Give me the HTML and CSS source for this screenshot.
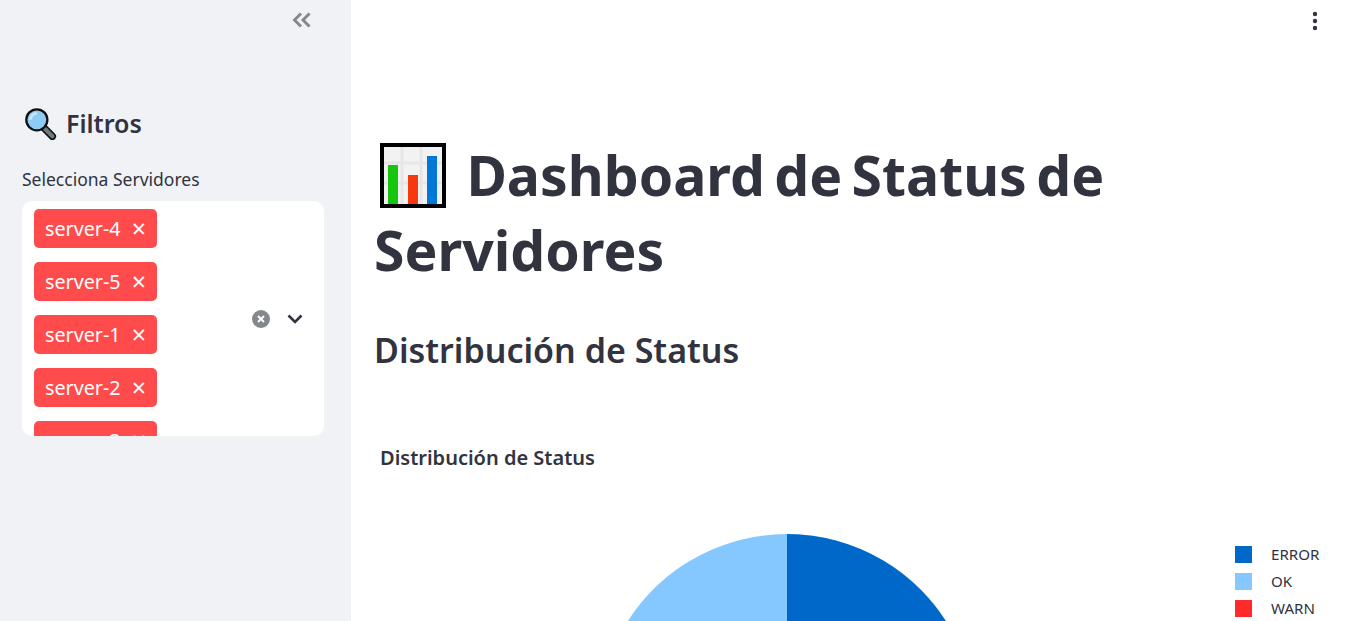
FILE: index.html
```html
<!DOCTYPE html>
<html lang="en">
<head>
    <meta charset="UTF-8">
    <meta name="viewport" content="width=device-width, initial-scale=1.0">
    <title>Dashboard de Status de Servidores</title>
    <link rel="stylesheet" href="styles.css">
</head>
<body>
    <aside class="sidebar">
        <div class="sidebar-top">
            <svg class="collapse-icon" viewBox="0 0 20 16" width="20" height="16" aria-hidden="true">
                <path d="M9 1.500 2.500 8 9 14.500M17.500 1.500 11 8l6.500 6.500" fill="none" stroke="#85878f" stroke-width="2.900"/>
            </svg>
        </div>
        <h2 class="sidebar-title">
            <svg class="lens-icon" viewBox="0 0 36 36" width="33" height="33" aria-hidden="true">
                <path d="M21 22 31 32" stroke="#111" stroke-width="8" stroke-linecap="round"/>
                <path d="M23 24 31 32" stroke="#6d7b80" stroke-width="4.500" stroke-linecap="round"/>
                <circle cx="14" cy="14" r="11.500" fill="#8ecbf5" stroke="#111" stroke-width="2.500"/>
                <path d="M7 14a7 7 0 0 1 7-7" stroke="#c8e6fa" stroke-width="3" fill="none"/>
            </svg>
            <span>Filtros</span>
        </h2>
        <label class="field-label">Selecciona Servidores</label>
        <div class="multiselect">
            <div class="tags">
                <span class="tag">server-4 <i class="tag-x">&times;</i></span>
                <span class="tag">server-5 <i class="tag-x">&times;</i></span>
                <span class="tag">server-1 <i class="tag-x">&times;</i></span>
                <span class="tag">server-2 <i class="tag-x">&times;</i></span>
                <span class="tag">server-3 <i class="tag-x">&times;</i></span>
            </div>
            <div class="select-controls">
                <svg viewBox="0 0 18 18" width="18" height="18" aria-hidden="true">
                    <circle cx="9" cy="9" r="9" fill="#85878f"/>
                    <path d="M6 6l6 6M12 6l-6 6" stroke="#fff" stroke-width="2"/>
                </svg>
                <svg viewBox="0 0 16 10" width="16" height="10" aria-hidden="true">
                    <path d="M1.500 1.500 8 8l6.500-6.500" fill="none" stroke="#31333f" stroke-width="2.600"/>
                </svg>
            </div>
        </div>
    </aside>

    <main class="main">
        <svg class="menu-icon" viewBox="0 0 6 20" width="6" height="20" aria-hidden="true">
            <circle cx="3" cy="3" r="2.200" fill="#31333f"/>
            <circle cx="3" cy="10" r="2.200" fill="#31333f"/>
            <circle cx="3" cy="17" r="2.200" fill="#31333f"/>
        </svg>
        <h1 class="page-title">
            <svg class="chart-emoji" viewBox="0 0 66 66" width="66" height="66" aria-hidden="true">
                <rect x="2" y="2" width="62" height="61" fill="#f2f2f2" stroke="#000" stroke-width="4"/>
                <path d="M4 20H62M4 40H62M22 4V61M41 4V61" stroke="#e6e6e6" stroke-width="3"/>
                <rect x="8" y="22" width="10" height="39" fill="#16c60c"/>
                <rect x="28" y="32" width="10" height="29" fill="#f7390f"/>
                <rect x="47" y="13" width="10" height="48" fill="#0078d7"/>
            </svg>
            Dashboard de Status de Servidores
        </h1>
        <h2 class="section-title">Distribución de Status</h2>
        <section class="chart">
            <h3 class="chart-title">Distribución de Status</h3>
            <div class="chart-body">
                <div class="pie-area">
                    <svg viewBox="0 0 380 380" width="380" height="380" aria-hidden="true">
                        <circle cx="190" cy="190" r="189" fill="#85c7ff"/>
                        <path d="M190 190V1A189 189 0 0 1 350 290Z" fill="#0068c9"/>
                    </svg>
                </div>
                <ul class="legend">
                    <li><span class="swatch swatch-error"></span>ERROR</li>
                    <li><span class="swatch swatch-ok"></span>OK</li>
                    <li><span class="swatch swatch-warn"></span>WARN</li>
                </ul>
            </div>
        </section>
    </main>
</body>
</html>
```

FILE: styles.css
```css
/* General Styles */
* {
    box-sizing: border-box;
}

html, body {
    height: 100%;
}

body {
    display: flex;
    margin: 0;
    overflow: hidden;
    font-family: 'Noto Sans', sans-serif;
    background-color: #fff;
    color: #31333f;
}

/* Sidebar */
.sidebar {
    flex: 0 0 351px;
    padding: 0 27px 0 22px;
    background-color: #f0f2f6;
}

.sidebar-top {
    display: flex;
    justify-content: flex-end;
    height: 103px;
    padding: 12px 12px 0 0;
}

.sidebar-title {
    display: flex;
    align-items: center;
    gap: 9px;
    height: 40px;
    margin: 0 0 25px;
    font-size: 25px;
    font-weight: 600;
}

.lens-icon {
    margin-left: 2px;
}

.field-label {
    display: block;
    height: 22px;
    margin-bottom: 11px;
    font-size: 17.500px;
    line-height: 22px;
}

.multiselect {
    display: flex;
    justify-content: space-between;
    align-items: center;
    height: 235px;
    padding: 8px 21px 0 12px;
    overflow: hidden;
    background-color: #fff;
    border-radius: 10px;
}

.tags {
    display: flex;
    flex-direction: column;
    align-items: flex-start;
    align-self: flex-start;
    gap: 14px;
}

.tag {
    display: flex;
    align-items: center;
    justify-content: space-between;
    width: 123px;
    height: 39px;
    padding: 0 11px;
    background-color: #ff4b4b;
    border-radius: 5px;
    color: #fff;
    font-size: 19.700px;
    white-space: nowrap;
}

.tag-x {
    font-style: normal;
    font-size: 25px;
    line-height: 1;
}

.select-controls {
    display: flex;
    align-items: center;
    gap: 17px;
    margin-bottom: 8px;
}

/* Main Content */
.main {
    position: relative;
    flex: 1;
    padding: 137px 24px 0 23px;
    overflow: hidden;
}

.menu-icon {
    position: absolute;
    top: 11px;
    right: 28px;
}

.page-title {
    margin: 0 0 38px;
    font-size: 55.300px;
    font-weight: 700;
    line-height: 75px;
    word-spacing: -5px;
}

.chart-emoji {
    margin: 0 11px -13px 6px;
}

.section-title {
    margin: 0 0 70px;
    font-size: 34px;
    font-weight: 600;
    line-height: 50px;
}

.chart-title {
    margin: 0 0 0 6px;
    font-size: 20px;
    font-weight: 600;
    line-height: 26px;
}

.chart-body {
    display: flex;
    padding-top: 62px;
}

.pie-area {
    display: flex;
    justify-content: center;
    flex: 0 0 826px;
}

/* Legend */
.legend {
    display: flex;
    flex-direction: column;
    gap: 9px;
    margin: 12px 0 0 35px;
    padding: 0;
    list-style: none;
    font-size: 15.100px;
}

.legend li {
    display: flex;
    align-items: center;
    gap: 19px;
    height: 18px;
}

.swatch {
    width: 17px;
    height: 17px;
}

.swatch-error {
    background-color: #0068c9;
}

.swatch-ok {
    background-color: #85c7ff;
}

.swatch-warn {
    background-color: #ff2b2b;
}
```
